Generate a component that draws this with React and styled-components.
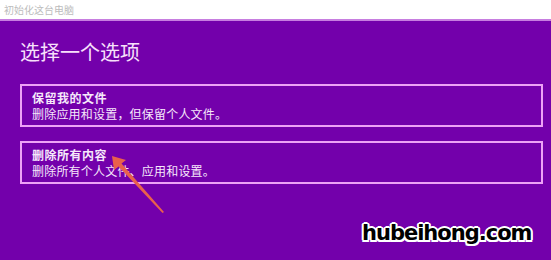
import React from "react";
import styled, { createGlobalStyle } from "styled-components";

const GlobalStyle = createGlobalStyle`
  html, body {
    margin: 0;
    padding: 0;
    background: #7300ab;
    font-family: "Noto Sans CJK SC", "Microsoft YaHei", sans-serif;
  }
`;

const Page = styled.div`
  position: relative;
  width: 551px;
  height: 260px;
  overflow: hidden;
  background: #7300ab;
`;

const TitleBar = styled.div`
  height: 21px;
  box-sizing: border-box;
  background: #ffffff;
  border-bottom: 2px solid #c77ee0;
  display: flex;
  align-items: center;
  padding-left: 4px;
  font-size: 10px;
  color: #bcbcbc;
`;

const Content = styled.div`
  padding: 17px 8px 0 20px;
`;

const Heading = styled.h1`
  margin: 0;
  font-size: 20px;
  line-height: 28px;
  font-weight: 400;
  color: #f8e0fb;
`;

const OptionList = styled.div`
  display: flex;
  flex-direction: column;
  gap: 14px;
  margin-top: 18px;
`;

const Option = styled.div`
  height: 43px;
  box-sizing: border-box;
  border: 2px solid #eea2f6;
  padding: 4px 10px 0 10px;
  color: #f6e8fb;
  display: flex;
  flex-direction: column;
`;

const OptionTitle = styled.div`
  font-size: 12px;
  line-height: 16px;
  font-weight: 700;
  letter-spacing: 0.5px;
`;

const OptionDesc = styled.div`
  font-size: 12px;
  line-height: 16px;
  letter-spacing: 0.2px;
`;

const Arrow = styled.svg`
  position: absolute;
  left: 104px;
  top: 150px;
  width: 70px;
  height: 70px;
`;

const Watermark = styled.div`
  position: absolute;
  left: 362px;
  top: 221px;
  font-family: "DejaVu Sans", sans-serif;
  font-weight: 700;
  font-size: 21px;
  letter-spacing: -1px;
  color: #000;
  text-shadow:
    -2px 0 #fff, 2px 0 #fff, 0 -2px #fff, 0 2px #fff,
    -1.5px -1.5px #fff, 1.5px -1.5px #fff, -1.5px 1.5px #fff, 1.5px 1.5px #fff;
`;

const options = [
  { title: "保留我的文件", desc: "删除应用和设置，但保留个人文件。" },
  { title: "删除所有内容", desc: "删除所有个人文件、应用和设置。" },
];

export default function App() {
  return (
    <Page>
      <GlobalStyle />
      <TitleBar>初始化这台电脑</TitleBar>
      <Content>
        <Heading>选择一个选项</Heading>
        <OptionList>
          {options.map((o) => (
            <Option key={o.title}>
              <OptionTitle>{o.title}</OptionTitle>
              <OptionDesc>{o.desc}</OptionDesc>
            </Option>
          ))}
        </OptionList>
      </Content>
      <Arrow viewBox="0 0 70 70">
        <path
          d="M8 6 L22 10 L17.5 13.5 L60 62 L58.5 63 L14.5 16.5 L10 20 Z"
          fill="#e9614c"
        />
      </Arrow>
      <Watermark>hubeihong.com</Watermark>
    </Page>
  );
}
